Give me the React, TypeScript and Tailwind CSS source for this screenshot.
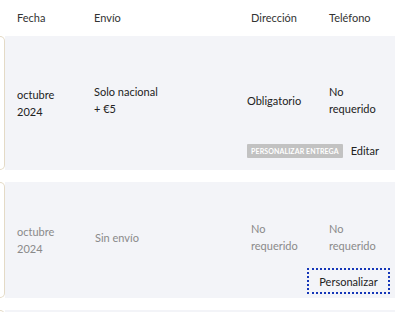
import React from "react";

const font = { fontFamily: "Lato, 'Liberation Sans', sans-serif" };

// beige stub on the left of each row
function Stub() {
  return <div className="w-[5px] shrink-0 rounded-r-[5px] border border-l-0 border-[#e4dac6] bg-white" />;
}

export default function App() {
  return (
    <div className="w-[405px] h-[312px] overflow-hidden bg-white text-[11px] text-[#222]" style={font}>
      {/* Header */}
      <div className="flex h-[36px] items-center text-[#333]">
        <div className="w-[94px] pl-[17px]">Fecha</div>
        <div className="w-[157px]">Envío</div>
        <div className="w-[78px]">Dirección</div>
        <div>Teléfono</div>
      </div>

      <div className="flex flex-col gap-[12px]">
        {/* Row 1 */}
        <div className="flex h-[134px] w-[395px]">
          <Stub />
          <div className="grid flex-1 grid-cols-[89px_157px_78px_1fr] grid-rows-[1fr_auto] bg-[#f3f4f8] leading-[17px]">
            <div className="col-start-1 row-start-1 row-span-2 self-center pl-[12px]">
              octubre
              <br />
              2024
            </div>
            <div className="col-start-2 row-start-1 row-span-2 self-center mb-[6px]">
              Solo nacional
              <br />+ €5
            </div>
            <div className="col-start-3 row-start-1 row-span-2 self-center mb-[6px] -ml-[4px]">Obligatorio</div>
            <div className="col-start-4 row-start-1 row-span-2 self-center mb-[6px]">
              No
              <br />
              requerido
            </div>
            <div className="col-start-3 col-span-2 row-start-2 flex items-center justify-end gap-[8px] pr-[16px] pb-[11px] -ml-[10px]">
              <span className="rounded-[1px] bg-[#c2c2c2] px-[4px] py-[3px] text-[7px] font-bold leading-[8px] tracking-[0.1px] text-white">
                PERSONALIZAR ENTREGA
              </span>
              <span>Editar</span>
            </div>
          </div>
        </div>

        {/* Row 2 */}
        <div className="flex h-[116px] w-[395px] text-[#8a8a8a]">
          <Stub />
          <div className="grid flex-1 grid-cols-[89px_157px_78px_1fr] grid-rows-[1fr_auto] bg-[#f3f4f8] leading-[17px]">
            <div className="col-start-1 row-start-1 row-span-2 self-center pl-[12px]">
              octubre
              <br />
              2024
            </div>
            <div className="col-start-2 row-start-1 row-span-2 self-center mb-[6px] pl-[1px]">Sin envío</div>
            <div className="col-start-3 row-start-1 row-span-2 self-center mb-[7px]">
              No
              <br />
              requerido
            </div>
            <div className="col-start-4 row-start-1 row-span-2 self-center mb-[7px]">
              No
              <br />
              requerido
            </div>
            <div className="col-start-3 col-span-2 row-start-2 flex justify-end pr-[5px] pb-[4px]">
              <button className="h-[26px] w-[83px] border-2 border-dotted border-[#1536b8] text-[11px] text-[#222]">
                Personalizar
              </button>
            </div>
          </div>
        </div>

        {/* Row 3 (cut off) */}
        <div className="flex h-[40px] w-[395px]">
          <Stub />
          <div className="flex-1 bg-[#f3f4f8]" />
        </div>
      </div>
    </div>
  );
}
